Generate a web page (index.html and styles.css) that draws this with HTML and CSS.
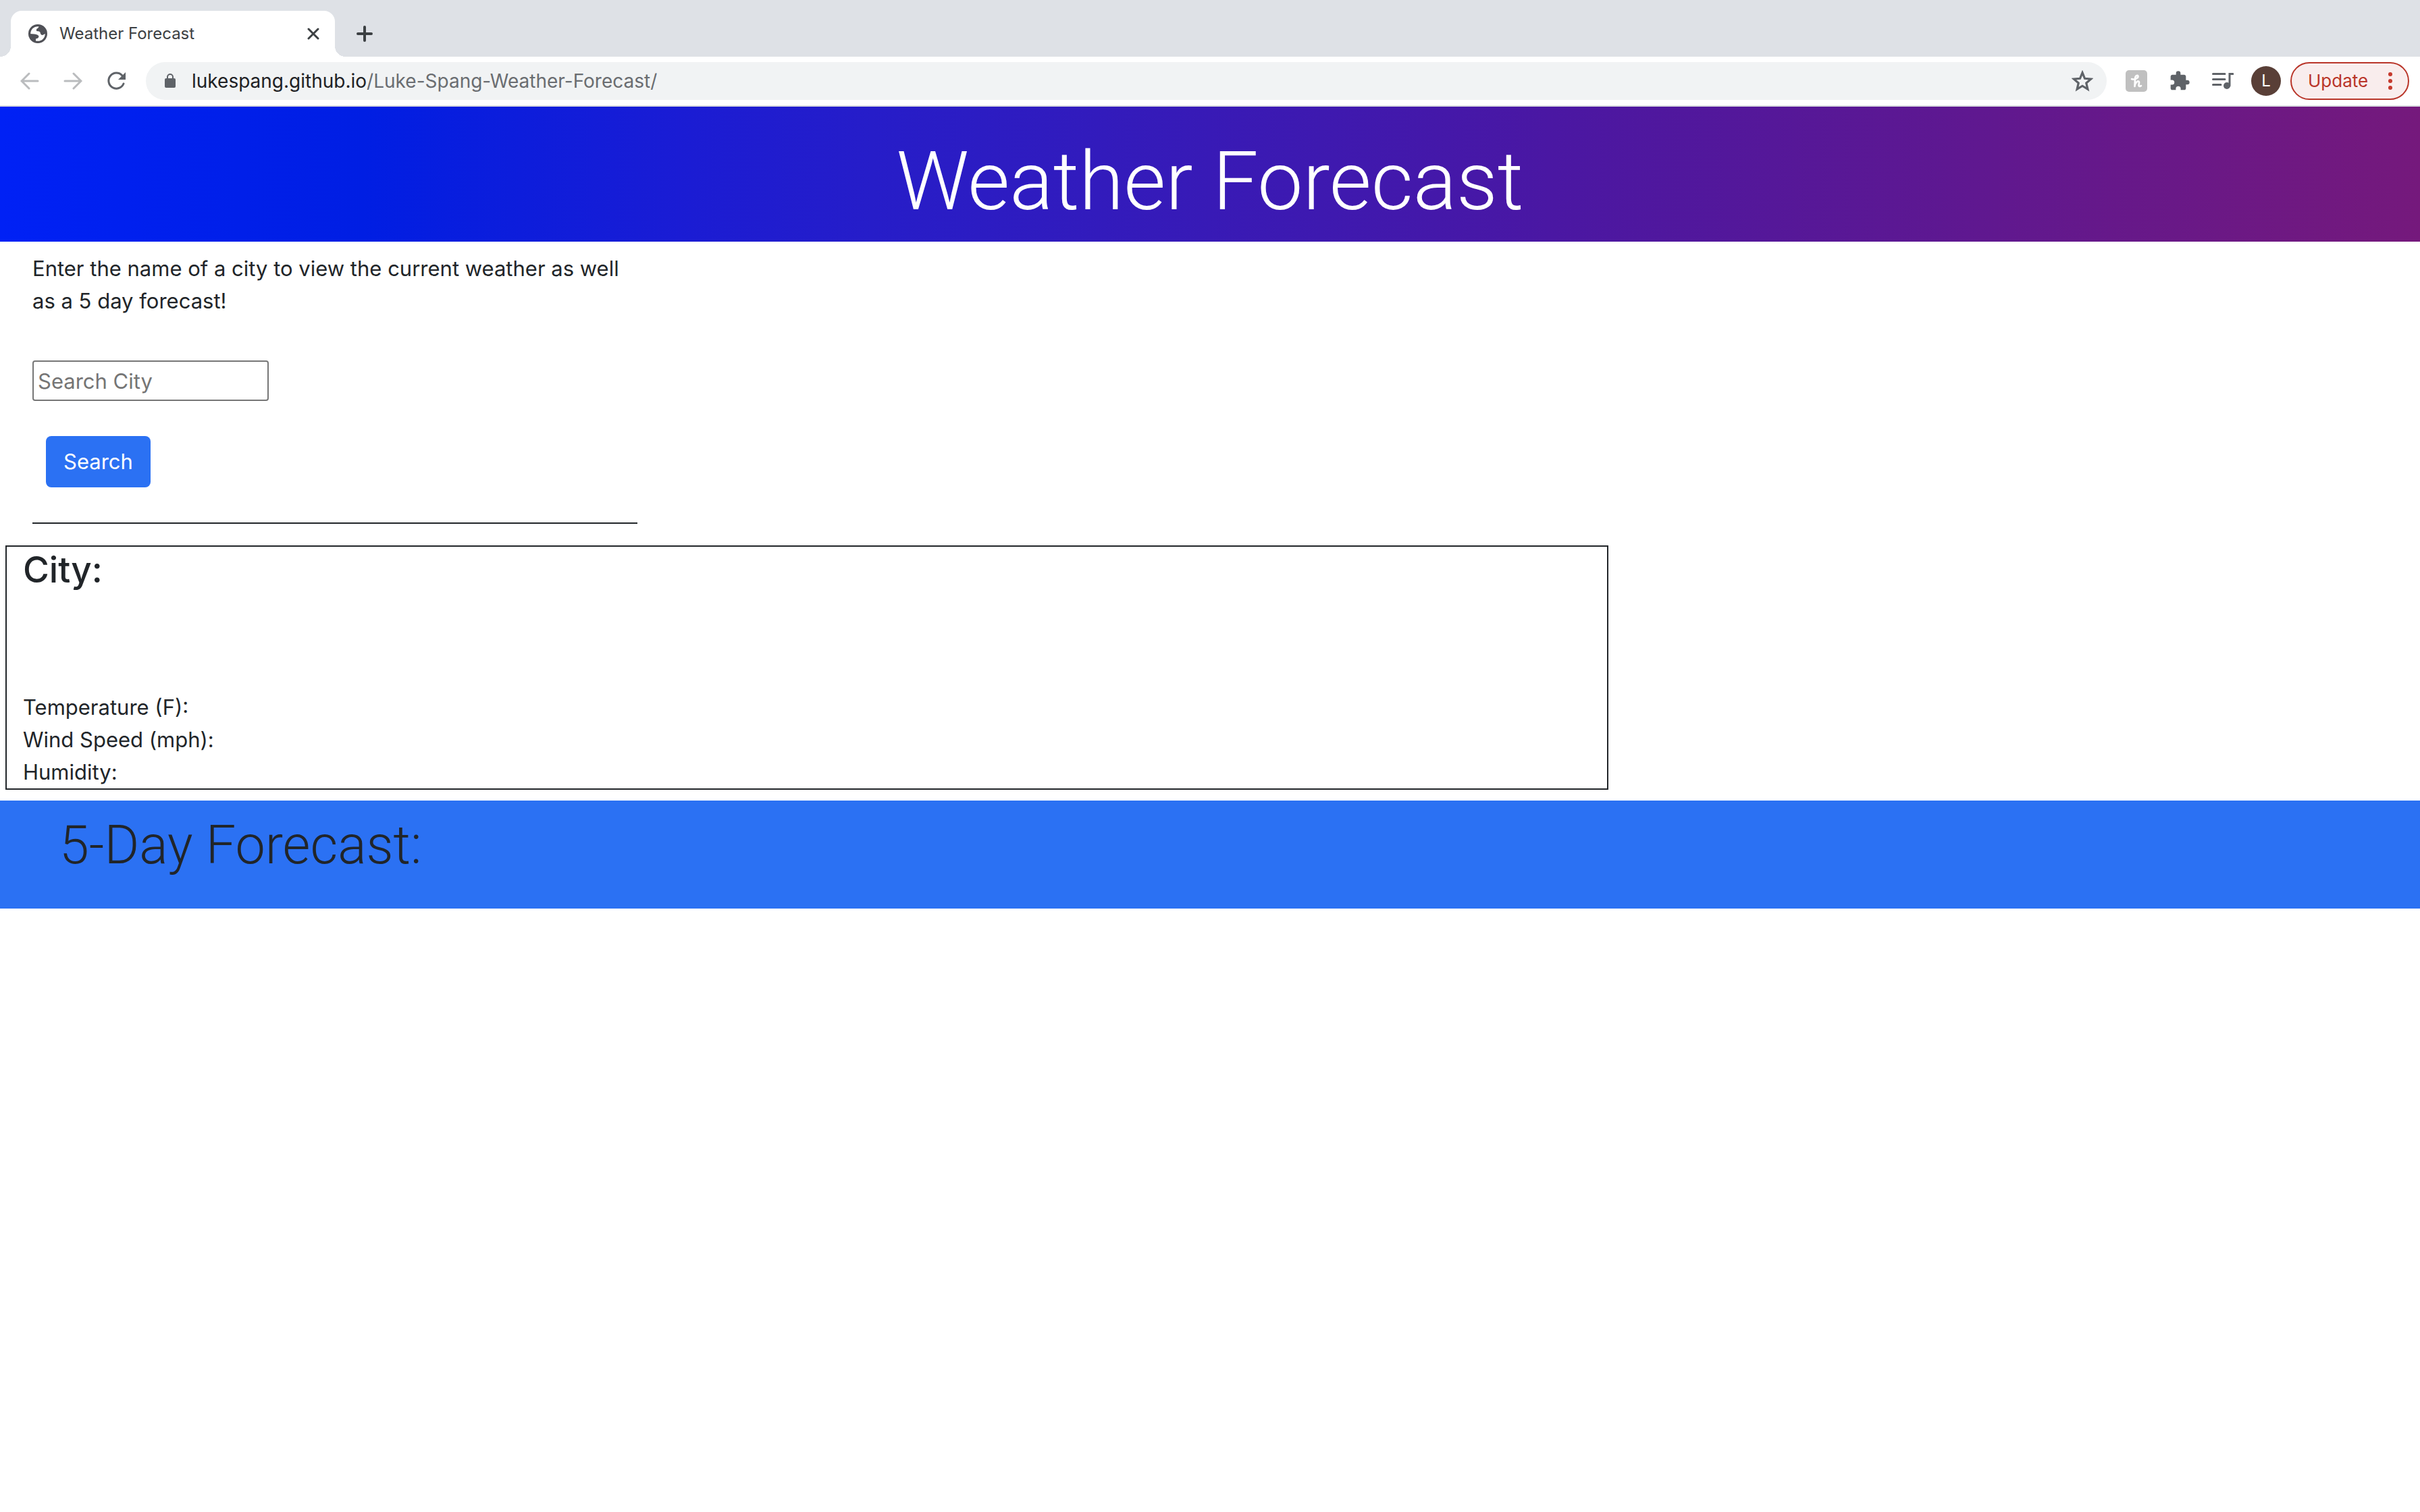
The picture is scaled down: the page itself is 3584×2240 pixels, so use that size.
FILE: index.html
```html
<!DOCTYPE html>
<html lang="en">
<head>
<meta charset="utf-8">
<title>Weather Forecast</title>
<link rel="stylesheet" href="styles.css">
</head>
<body>
<div class="browser">
  <div class="tab-strip">
    <div class="tab">
      <svg class="tab-icon" viewBox="0 0 28 28" aria-hidden="true"><circle cx="14" cy="14" r="14" fill="#505157"/><circle cx="14" cy="14" r="10.800" fill="#fff"/><path fill="#505157" d="M16 2Q15 6 12 7V10Q17 10 17.500 12Q18 16 21 16L25 14L26 8L20 2ZM2 14L9 14.500Q15 15 15.500 18Q15 21 11 21.500V26L5 23Z"/></svg>
      <span class="tab-title">Weather Forecast</span>
      <button class="icon-button" type="button" aria-label="Close tab"><svg class="tab-close" viewBox="0 0 18 18"><path d="M2 2 16 16M16 2 2 16"/></svg></button>
    </div>
    <button class="icon-button" type="button" aria-label="New tab"><svg class="tab-new" viewBox="0 0 24 24"><path d="M12 2V22M2 12H22"/></svg></button>
  </div>
  <div class="toolbar">
    <div class="nav">
      <button class="icon-button" type="button" aria-label="Back"><svg class="nav-icon nav-off" viewBox="0 0 28 28"><path d="M26 14H3M13 3 2 14 13 25"/></svg></button>
      <button class="icon-button" type="button" aria-label="Forward"><svg class="nav-icon nav-off" viewBox="0 0 28 28"><path d="M2 14H25M15 3 26 14 15 25"/></svg></button>
      <button class="icon-button" type="button" aria-label="Reload"><svg class="nav-icon nav-reload" viewBox="0 0 28 28"><path d="M25 18A11.500 11.500 0 1 1 23 6"/><path class="solid" d="M28 1V12H17Z"/></svg></button>
    </div>
    <div class="omnibox">
      <svg class="lock" viewBox="0 0 16 22" aria-hidden="true"><rect y="7" width="16" height="14" rx="2" fill="#5f6368"/><path d="M4 8V5a4 4 0 0 1 8 0V8" fill="none" stroke="#5f6368" stroke-width="2"/></svg>
      <span class="url">lukespang.github.io<span class="url-path">/Luke-Spang-Weather-Forecast/</span></span>
      <svg class="star" viewBox="0 0 30 30" aria-hidden="true"><path d="M15 3.500 18.300 11.500 27 12.200 20.400 17.900 22.400 26.300 15 21.800 7.600 26.300 9.600 17.900 3 12.200 11.700 11.500Z"/></svg>
    </div>
    <div class="extensions">
      <svg viewBox="0 0 32 32" aria-hidden="true"><rect width="32" height="32" rx="5" fill="#c0c0c0"/><path d="M9 13C12 14.500 19 12 18.500 9C18 6.500 14 8 14 13L13.500 24C14 18 19 14.500 20 17.500C20.500 20 18 24 21 24L23 23" fill="none" stroke="#fff" stroke-width="2.600" stroke-linecap="round" stroke-linejoin="round"/></svg>
      <svg viewBox="0 0 24 24" aria-hidden="true"><path fill="#5f6368" d="M20.500 11H19V7c0-1.100-.9-2-2-2h-4V3.500a2.500 2.500 0 0 0-5 0V5H4c-1.100 0-2 .9-2 2v3.800h1.500a2.700 2.700 0 0 1 0 5.400H2V20c0 1.100.9 2 2 2h3.800v-1.500a2.700 2.700 0 0 1 5.400 0V22H17c1.100 0 2-.9 2-2v-4h1.500a2.500 2.500 0 0 0 0-5z"/></svg>
      <svg viewBox="0 0 32 32" aria-hidden="true"><path d="M1.500 5.500H19M1.500 13.500H19M1.500 21.500H13M31 5.500H26V23" fill="none" stroke="#5f6368" stroke-width="3" stroke-linecap="round"/><circle cx="22" cy="23" r="5" fill="#5f6368"/></svg>
    </div>
    <span class="avatar">L</span>
    <button class="update" type="button">Update<svg class="dots" viewBox="0 0 6 28" aria-hidden="true"><circle cx="3" cy="4" r="3"/><circle cx="3" cy="14" r="3"/><circle cx="3" cy="24" r="3"/></svg></button>
  </div>
</div>
<header class="banner"><h1>Weather Forecast</h1></header>
<main>
  <form class="search">
    <label class="intro" for="city">Enter the name of a city to view the current weather as well as a 5 day forecast!</label>
    <input class="city-input" id="city" type="text" placeholder="Search City">
    <button class="search-button" type="button">Search</button>
  </form>
  <section class="current">
    <h2>City:</h2>
    <div class="readings">
      <p>Temperature (F):</p>
      <p>Wind Speed (mph):</p>
      <p>Humidity:</p>
    </div>
  </section>
  <section class="forecast"><h2>5-Day Forecast:</h2></section>
</main>
</body>
</html>
```
FILE: styles.css
```css
* { box-sizing: border-box; }
body { margin: 0; background: #fff; color: #212529; font-family: Inter, "Liberation Sans", sans-serif; font-size: 31px; line-height: 48px; }
h1, h2, p { margin: 0; }
button, input { font: inherit; }
svg { display: block; flex: none; }
.icon-button { display: flex; padding: 0; border: 0; background: none; fill: none; stroke: #3c4043; stroke-width: 4; stroke-linecap: round; }
.browser { border-bottom: 2px solid #dadce0; background: #fff; }
.tab-strip { display: flex; align-items: center; gap: 32px; height: 84px; padding: 16px 16px 0; background: #dee1e6; }
.tab { position: relative; display: flex; align-items: center; width: 480px; height: 68px; padding: 0 23px 0 26px; border-radius: 16px 16px 0 0; background: #fff; }
.tab::before, .tab::after { content: ""; position: absolute; bottom: 0; width: 16px; height: 16px; }
.tab::before { right: 100%; background: radial-gradient(circle at 0 0, #dee1e6 16px, #fff 16px); }
.tab::after { left: 100%; background: radial-gradient(circle at 100% 0, #dee1e6 16px, #fff 16px); }
.tab-icon { width: 28px; height: 28px; }
.tab-title { flex: 1; margin-left: 18px; color: #3c4043; font-size: 24px; }
.tab-close { width: 18px; height: 18px; stroke-width: 3; }
.tab-new { width: 24px; height: 24px; }
.toolbar { display: flex; align-items: center; height: 72px; padding: 0 16px 0 30px; }
.nav { display: flex; gap: 36px; margin-right: 30px; }
.nav-icon { width: 28px; height: 28px; stroke-width: 3; }
.nav-off { stroke: #babcbe; }
.nav-reload { stroke: #5f6368; }
.solid { fill: #5f6368; stroke: none; }
.omnibox { display: flex; flex: 1; align-items: center; height: 56px; padding: 0 20px 0 28px; border-radius: 28px; background: #f1f3f4; }
.lock { width: 16px; height: 22px; }
.url { flex: 1; margin-left: 24px; color: #202124; font-size: 28px; }
.url-path { color: #6a6d71; }
.star { width: 32px; height: 32px; fill: none; stroke: #5f6368; stroke-width: 3; }
.extensions { display: flex; gap: 32px; margin: 0 26px 0 28px; }
.extensions svg { width: 32px; height: 32px; }
.avatar { width: 44px; height: 44px; border-radius: 50%; background: #593f37; color: #fff; font-size: 24px; line-height: 44px; text-align: center; }
.update { display: flex; align-items: center; justify-content: space-between; width: 176px; height: 56px; margin-left: 14px; padding: 0 23px 0 24px; border: 2px solid #b93529; border-radius: 28px; background: #f9eded; color: #b93529; font-size: 26px; }
.dots { width: 6px; height: 28px; fill: #c5392c; }
.banner { padding: 34px 0 12px; background: linear-gradient(to right, #0021f5, #001ee3 15%, #1a1cd4 28%, #261dc9 36%, #4a17a3 64%, #75197c); color: #fff; text-align: center; }
.banner h1 { font-family: Roboto, Inter, sans-serif; font-size: 120px; font-weight: 350; line-height: 154px; }
.search { display: flex; flex-direction: column; align-items: flex-start; width: 25%; margin: 16px 48px 32px; border-bottom: 2px solid #212529; }
.city-input { width: 350px; height: 60px; margin: 64px 0 52px; padding: 0 6px; border: 2px solid #767676; border-radius: 4px; background: #fff; }
.city-input::placeholder { color: #757575; opacity: 1; }
.search-button { height: 76px; margin: 0 20px 52px; padding: 0 26px; border: 0; border-radius: 8px; background: #2b71f3; color: #fff; }
.current { width: 66.25%; margin: 0 8px 16px; padding: 0 24px; border: 2px solid #212529; }
.current h2 { margin-bottom: 146px; font-size: 53px; font-weight: 500; line-height: 68px; }
.forecast { padding: 18px 88px 46px; background: #2b71f3; }
.forecast h2 { font-family: Roboto, Inter, sans-serif; font-size: 79px; font-weight: 350; line-height: 96px; }
```
